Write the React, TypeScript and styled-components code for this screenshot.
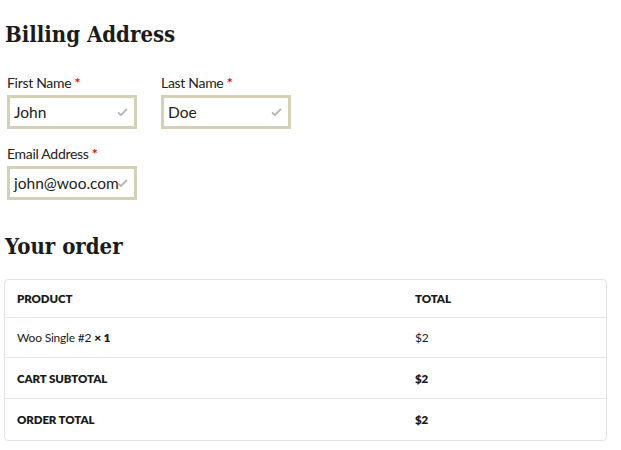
import React from "react";
import styled, { createGlobalStyle } from "styled-components";

const Global = createGlobalStyle`
  html, body { margin: 0; padding: 0; background: #fff; }
  body { font-family: "Lato", "Open Sans", sans-serif; color: #111; }
`;

const Page = styled.div`
  padding: 21px 14px 0 4px;
`;

const Heading = styled.h3`
  margin: 0;
  padding-left: 1px;
  font-family: "DejaVu Serif Condensed", "DejaVu Serif", serif;
  font-stretch: condensed;
  font-weight: 700;
  font-size: 22px;
  line-height: 26px;
  color: #1b1b1b;
`;

const FormGrid = styled.div`
  display: grid;
  grid-template-columns: 130px 130px;
  column-gap: 24px;
  row-gap: 15px;
  padding: 0 3px;
  margin-top: 26px;
`;

const Field = styled.div`
  display: flex;
  flex-direction: column;
`;

const Label = styled.label`
  font-size: 14px;
  letter-spacing: -0.3px;
  line-height: 20px;
  color: #222;
  margin-bottom: 2px;
  white-space: nowrap;
`;

const Req = styled.span`
  color: #ff0000;
  font-weight: 700;
`;

const InputBox = styled.div`
  position: relative;
  box-sizing: border-box;
  width: 130px;
  height: 34px;
  border: 3px solid #d4d1b8;
  background: #fff;
  display: flex;
  align-items: center;
  padding-left: 4px;
  overflow: hidden;
`;

const Value = styled.span`
  font-size: 15.5px;
  color: #222;
  white-space: nowrap;
`;

const Check = styled.svg`
  position: absolute;
  right: 6px;
  top: 50%;
  margin-top: -4px;
`;

const OrderHeading = styled(Heading)`
  margin-top: 33px;
`;

const TableWrap = styled.div`
  margin-top: 20px;
  border: 1px solid #e3e3e3;
  border-radius: 4px;
  overflow: hidden;
  width: 603px;
  box-sizing: border-box;
`;

const Row = styled.div<{ $h: number; $last?: boolean }>`
  display: grid;
  grid-template-columns: 398px 1fr;
  height: ${(p) => p.$h}px;
  border-bottom: ${(p) => (p.$last ? "none" : "1px solid #e6e6e6")};
  box-sizing: border-box;
  align-items: center;
`;

const Cell = styled.div<{ $bold?: boolean }>`
  padding-left: 12px;
  font-size: ${(p) => (p.$bold ? "11.5px" : "12px")};
  font-weight: ${(p) => (p.$bold ? 800 : 400)};
  letter-spacing: ${(p) => (p.$bold ? "-0.1px" : "-0.2px")};
  color: #1a1a1a;
`;

const Qty = styled.strong`
  font-weight: 800;
`;

const CheckIcon = () => (
  <Check width="11" height="8" viewBox="0 0 11 8">
    <path d="M1 4.5 L4 7 L10 1" stroke="#b9b9b9" strokeWidth="2" fill="none" />
  </Check>
);

const Input = ({ value }: { value: string }) => (
  <InputBox>
    <Value>{value}</Value>
    <CheckIcon />
  </InputBox>
);

export default function App() {
  return (
    <>
      <Global />
      <Page>
        <Heading>Billing Address</Heading>
        <FormGrid>
          <Field>
            <Label>
              First Name <Req>*</Req>
            </Label>
            <Input value="John" />
          </Field>
          <Field>
            <Label>
              Last Name <Req>*</Req>
            </Label>
            <Input value="Doe" />
          </Field>
          <Field>
            <Label>
              Email Address <Req>*</Req>
            </Label>
            <Input value="john@woo.com" />
          </Field>
        </FormGrid>
        <OrderHeading>Your order</OrderHeading>
        <TableWrap>
          <Row $h={38}>
            <Cell $bold>PRODUCT</Cell>
            <Cell $bold>TOTAL</Cell>
          </Row>
          <Row $h={40}>
            <Cell>
              Woo Single #2 <Qty>× 1</Qty>
            </Cell>
            <Cell>$2</Cell>
          </Row>
          <Row $h={41}>
            <Cell $bold>CART SUBTOTAL</Cell>
            <Cell $bold>$2</Cell>
          </Row>
          <Row $h={41} $last>
            <Cell $bold>ORDER TOTAL</Cell>
            <Cell $bold>$2</Cell>
          </Row>
        </TableWrap>
      </Page>
    </>
  );
}
